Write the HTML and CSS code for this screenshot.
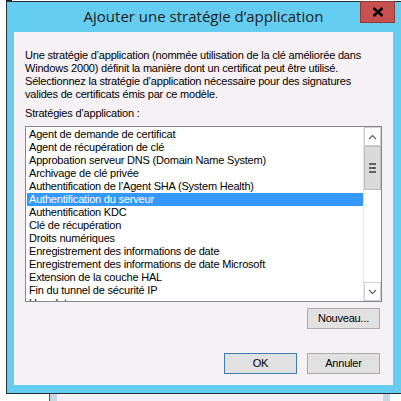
FILE: index.html
```html
<!DOCTYPE html>
<html>
  <head>
    <meta charset='utf-8'>
    <title>Ajouter une stratégie d'application</title>
    <link rel="stylesheet" href="styles.css">
  </head>
  <body>
    <div id='desktop_top'></div>
    <div id='window'>
      <div id='titlebar'>
        <span id='title'>Ajouter une stratégie d’application</span>
        <div id='close'>
          <svg width='12' height='10' viewBox='0 0 12 10'>
            <path d='M1.5 1 L10.5 9 M10.5 1 L1.5 9' stroke='#000' stroke-width='2.4' />
          </svg>
        </div>
      </div>
      <div id='content'>
        <p id='intro'>Une stratégie d’application (nommée utilisation de la clé améliorée dans Windows 2000) définit la manière dont un certificat peut être utilisé. Sélectionnez la stratégie d’application nécessaire pour des signatures valides de certificats émis par ce modèle.</p>
        <div id='list_label'>Stratégies d’application :</div>
        <div id='listbox'>
          <div id='items'>
            <div class='item'>Agent de demande de certificat</div>
            <div class='item'>Agent de récupération de clé</div>
            <div class='item'>Approbation serveur DNS (Domain Name System)</div>
            <div class='item'>Archivage de clé privée</div>
            <div class='item'>Authentification de l’Agent SHA (System Health)</div>
            <div class='item selected'>Authentification du serveur</div>
            <div class='item'>Authentification KDC</div>
            <div class='item'>Clé de récupération</div>
            <div class='item'>Droits numériques</div>
            <div class='item'>Enregistrement des informations de date</div>
            <div class='item'>Enregistrement des informations de date Microsoft</div>
            <div class='item'>Extension de la couche HAL</div>
            <div class='item'>Fin du tunnel de sécurité IP</div>
            <div class='item'>Horodatage</div>
          </div>
          <div id='scrollbar'>
            <div class='arrow'>
              <svg width='9' height='6' viewBox='0 0 9 6'><path d='M1 5 L4.5 1.5 L8 5' stroke='#606060' fill='none' stroke-width='1.2' /></svg>
            </div>
            <div id='thumb'>
              <span></span><span></span><span></span>
            </div>
            <div id='track'></div>
            <div class='arrow'>
              <svg width='9' height='6' viewBox='0 0 9 6'><path d='M1 1 L4.5 4.5 L8 1' stroke='#606060' fill='none' stroke-width='1.2' /></svg>
            </div>
          </div>
        </div>
        <div class='row'>
          <div class='button'>Nouveau...</div>
        </div>
        <div class='row bottom'>
          <div class='button default'>OK</div>
          <div class='button'>Annuler</div>
        </div>
      </div>
    </div>
    <div id='desktop_bottom'>
      <span class='tile a'></span>
      <span class='tile b'></span>
      <span class='tile c'></span>
    </div>
  </body>
</html>
```

FILE: styles.css
```css
html, body {
  margin: 0;
  width: 401px;
  height: 401px;
  overflow: hidden;
  background: #fff;
  font-family: "Liberation Sans", Arial, sans-serif;
}

#desktop_top {
  height: 1px;
  margin-left: 6px;
  width: 6px;
  background: #222;
}

#window {
  margin-left: 6px;
  width: 395px;
  background: #65cdf0;
  border: 1px solid #2a2f33;
  border-right: none;
  padding: 0 0 8px 7px;
  box-sizing: border-box;
}

#titlebar {
  height: 30px;
  display: flex;
  position: relative;
}

#title {
  width: 379px;
  text-align: center;
  font-family: "Open Sans", "Noto Sans", sans-serif;
  font-size: 15px;
  line-height: 28px;
  color: #1c1c1c;
}

#close {
  position: absolute;
  left: 346px;
  top: -1px;
  width: 33px;
  height: 20px;
  background: #c75050;
  border: 1px solid #8c3a3a;
  display: flex;
  align-items: center;
  justify-content: center;
}

#content {
  width: 379px;
  height: 353px;
  background: #f5f1f5;
  padding: 17px 0 0 11px;
  box-sizing: border-box;
  font-size: 11px;
  line-height: 13px;
  letter-spacing: -0.2px;
  color: #000;
}

#intro {
  margin: 0;
  width: 350px;
}

#list_label {
  margin-top: 6px;
}

#listbox {
  margin-top: 6px;
  width: 357px;
  height: 176px;
  border: 1px solid #828790;
  box-sizing: border-box;
  background: #fff;
  display: flex;
  overflow: hidden;
}

#items {
  flex: 1;
  padding: 1px 0 0 1px;
  overflow: hidden;
}

.item {
  height: 13px;
  padding-left: 2px;
  white-space: nowrap;
}

.item.selected {
  background: #3399ff;
  color: #fff;
}

#scrollbar {
  width: 17px;
  display: flex;
  flex-direction: column;
  border-left: 1px solid #e6e6e6;
}

.arrow {
  height: 17px;
  border: 1px solid #d0d0d0;
  background: #fff;
  display: flex;
  align-items: center;
  justify-content: center;
}

#thumb {
  height: 42px;
  background: #dadada;
  border: 1px solid #bdbdbd;
  display: flex;
  flex-direction: column;
  align-items: center;
  justify-content: center;
  gap: 2px;
}

#thumb span {
  width: 7px;
  height: 2px;
  background: #606060;
}

#track {
  flex: 1;
  background: #fff;
}

.row {
  display: flex;
  justify-content: flex-end;
  gap: 10px;
  width: 355px;
  margin-top: 6px;
}

.row.bottom {
  margin-top: 24px;
}

.button {
  width: 73px;
  height: 21px;
  box-sizing: border-box;
  background: #e1e1e1;
  border: 1px solid #adadad;
  text-align: center;
  line-height: 19px;
}

.button.default {
  border-color: #3c7fb1;
}

#desktop_bottom {
  position: relative;
  height: 8px;
}

.tile {
  position: absolute;
  top: 0;
  height: 8px;
}

.tile.a {
  left: 49px;
  width: 8px;
  background: #c5d8df;
  border-left: 1px solid #555;
}

.tile.b {
  left: 57px;
  width: 327px;
  background: #f5f1f5;
}

.tile.c {
  left: 383px;
  width: 7px;
  background: #c5d8df;
}
```
